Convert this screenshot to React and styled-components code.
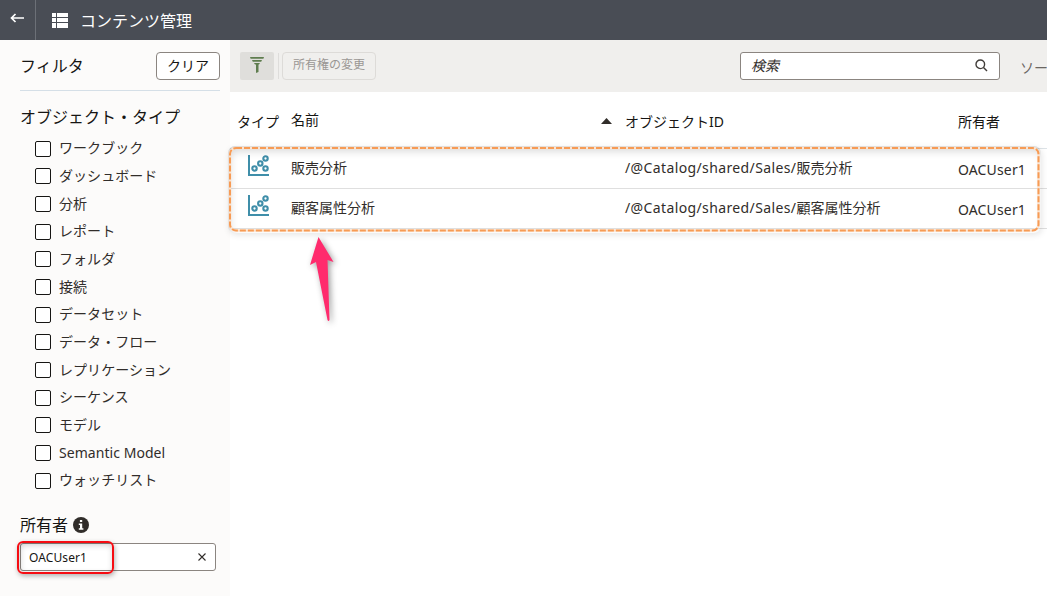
import styled, { createGlobalStyle } from "styled-components";

const objectTypes = [
  "ワークブック",
  "ダッシュボード",
  "分析",
  "レポート",
  "フォルダ",
  "接続",
  "データセット",
  "データ・フロー",
  "レプリケーション",
  "シーケンス",
  "モデル",
  "Semantic Model",
  "ウォッチリスト",
];

const contents = [
  { name: "販売分析", folder: "/@Catalog/shared/Sales/", owner: "OACUser1" },
  { name: "顧客属性分析", folder: "/@Catalog/shared/Sales/", owner: "OACUser1" },
];

const ScatterIcon = () => (
  <svg width="22" height="22" viewBox="0 0 22 22" fill="none" stroke="#3f8ea9">
    <path d="M1 0V20H21" strokeWidth="2" />
    <g strokeWidth="2.1">
      <circle cx="6.5" cy="13.5" r="2.2" />
      <circle cx="12.3" cy="8.5" r="2.2" />
      <circle cx="17.5" cy="3.5" r="2.2" />
      <circle cx="17.5" cy="13.5" r="2.2" />
    </g>
  </svg>
);

const Header = () => (
  <TopBar>
    <BackButton>
      <svg width="14" height="10" viewBox="0 0 14 10" fill="none" stroke="#fff" strokeWidth="1.7">
        <path d="M14 5H1.5M5.5 1L1.5 5L5.5 9" />
      </svg>
    </BackButton>
    <svg width="16" height="15" viewBox="0 0 16 15" fill="#fff">
      <path d="M0 0h4v4H0zM5 0h11v4H5zM0 5h4v4H0zM5 5h11v4H5zM0 10h4v5H0zM5 10h11v5H5z" />
    </svg>
    <PageTitle>コンテンツ管理</PageTitle>
  </TopBar>
);

const FilterPanel = () => (
  <Side>
    <SideHead>
      <SideTitle>フィルタ</SideTitle>
      <ClearButton>クリア</ClearButton>
    </SideHead>
    <GroupTitle>オブジェクト・タイプ</GroupTitle>
    <TypeList>
      {objectTypes.map((type) => (
        <TypeItem key={type}>
          <CheckBox />
          <TypeName>{type}</TypeName>
        </TypeItem>
      ))}
    </TypeList>
    <OwnerTitle>
      所有者
      <svg width="16" height="16" viewBox="0 0 16 16">
        <circle cx="8" cy="8" r="8" fill="#312d2a" />
        <path d="M6.9 3h2.3v2H6.9zM5.8 6.5h3.4v4.8h1.2v1.5H5.8v-1.5H7V8H5.8z" fill="#fff" />
      </svg>
    </OwnerTitle>
    <OwnerField>
      <OwnerValue>OACUser1</OwnerValue>
      <svg width="8" height="8" viewBox="0 0 8 8" stroke="#312d2a" strokeWidth="1.1">
        <path d="M.5 .5L7.5 7.5M7.5 .5L.5 7.5" />
      </svg>
      <OwnerMark />
    </OwnerField>
  </Side>
);

const Toolbar = () => (
  <Tools>
    <FilterToggle>
      <svg width="14" height="16" viewBox="0 0 14 16" fill="#5f7d4f">
        <path d="M0 0H14L13.4 1.8H.6zM2 3H12L11.2 4.8H2.8zM4 6H10L9 7.6H8.5V15L6 16V7.6H5z" />
      </svg>
    </FilterToggle>
    <ToolDivider />
    <OwnerChange disabled>所有権の変更</OwnerChange>
    <Search>
      <em>検索</em>
      <svg width="13" height="13" viewBox="0 0 13 13" fill="none" stroke="#403c38" strokeWidth="1.4">
        <circle cx="5.3" cy="5.3" r="4.3" />
        <path d="M8.5 8.5L12 12" />
      </svg>
    </Search>
    <SortLabel>ソート</SortLabel>
  </Tools>
);

const ContentTable = () => (
  <Table>
    <HeadRow>
      <HeadCell>タイプ</HeadCell>
      <NameHead>
        <span>名前</span>
        <svg width="11" height="6" viewBox="0 0 11 6" fill="#312d2a">
          <path d="M5.5 0L11 6H0z" />
        </svg>
      </NameHead>
      <HeadCell>オブジェクトID</HeadCell>
      <HeadCell>所有者</HeadCell>
    </HeadRow>
    <Rows>
      {contents.map((item) => (
        <Row key={item.name}>
          <IconCell>
            <ScatterIcon />
          </IconCell>
          <Cell>{item.name}</Cell>
          <Cell>
            <Folder>{item.folder}</Folder>
            {item.name}
          </Cell>
          <Cell $low>{item.owner}</Cell>
        </Row>
      ))}
      <RowsMark>
        <svg width="813" height="87" fill="none">
          <rect x="2" y="2" width="808.5" height="82.5" rx="6" stroke="#fbe3cf" strokeWidth="2.5" />
          <rect
            x="2"
            y="2"
            width="808.5"
            height="82.5"
            rx="6"
            stroke="#f79b55"
            strokeWidth="2"
            strokeDasharray="6 2"
          />
        </svg>
      </RowsMark>
      <Pointer width="34" height="94" viewBox="0 0 34 94">
        <path d="M12.5 3L27.5 28L21.5 26L23.5 86Q22.5 88 21.5 86L10 28L4 31Z" fill="#ff2b6d" />
      </Pointer>
    </Rows>
  </Table>
);

const App = () => (
  <Container>
    <GlobalStyle />
    <Header />
    <Body>
      <FilterPanel />
      <Main>
        <Toolbar />
        <ContentTable />
      </Main>
    </Body>
  </Container>
);

export default App;

const GlobalStyle = createGlobalStyle`
  * {
    box-sizing: border-box;
  }
  body {
    margin: 0;
    overflow: hidden;
    font-family: "Noto Sans", "Noto Sans CJK JP", sans-serif;
    font-size: 14px;
    color: #312d2a;
  }
  svg {
    display: block;
    flex-shrink: 0;
  }
  button {
    font: inherit;
    padding: 0;
  }
`;

const Container = styled.div`
  width: 1047px;
  height: 596px;
  display: flex;
  flex-direction: column;
  overflow: hidden;
  background: #fff;
`;

const TopBar = styled.header`
  height: 40px;
  flex-shrink: 0;
  display: flex;
  align-items: center;
  background: #494d55;
  color: #fff;
`;

const BackButton = styled.div`
  width: 36px;
  height: 40px;
  margin-right: 16px;
  padding: 13px 0 0 10px;
  border-right: 1px solid #6c7077;
`;

const PageTitle = styled.h1`
  margin: 1px 0 0 12px;
  font-size: 16px;
  font-weight: 400;
  line-height: 24px;
`;

const Body = styled.div`
  flex: 1;
  display: flex;
`;

const Side = styled.aside`
  width: 230px;
  flex-shrink: 0;
  padding: 12px 10px 0 20px;
  background: #fcfbfa;
`;

const SideHead = styled.div`
  height: 39px;
  display: flex;
  justify-content: space-between;
  align-items: flex-start;
  border-bottom: 1px solid #d5dfe7;
`;

const SideTitle = styled.h2`
  margin: 2px 0 0;
  font-size: 16px;
  font-weight: 400;
  line-height: 24px;
  color: #161513;
`;

const ClearButton = styled.button`
  width: 64px;
  height: 28px;
  border: 1px solid #8b8580;
  border-radius: 4px;
  background: #fff;
  color: #161513;
  line-height: 26px;
`;

const GroupTitle = styled.h3`
  margin: 14px 0 0;
  font-size: 16px;
  font-weight: 400;
  line-height: 24px;
  color: #161513;
`;

const TypeList = styled.ul`
  list-style: none;
  margin: 6px 0 0;
  padding: 0 0 0 15px;
`;

const TypeItem = styled.li`
  height: 27.66px;
  display: flex;
  align-items: center;
`;

const CheckBox = styled.span`
  width: 16px;
  height: 16px;
  margin-right: 8px;
  border: 1px solid #161513;
  border-radius: 2px;
  background: #fff;
`;

const TypeName = styled.span`
  line-height: 20px;
  padding-bottom: 1px;
  letter-spacing: 0.05px;
`;

const OwnerTitle = styled.h3`
  display: flex;
  align-items: center;
  gap: 5px;
  margin: 18px 0 0;
  font-size: 16px;
  font-weight: 400;
  line-height: 24px;
  color: #161513;
`;

const OwnerField = styled.div`
  position: relative;
  width: 196px;
  height: 28px;
  margin-top: 6px;
  padding: 0 9px 0 8px;
  display: flex;
  align-items: center;
  justify-content: space-between;
  border: 1px solid #8b8580;
  border-radius: 3px;
  background: #fff;
  font-size: 12px;
  color: #161513;
`;

const OwnerValue = styled.span`
  padding-top: 2px;
  letter-spacing: 0.1px;
`;

const OwnerMark = styled.div`
  position: absolute;
  left: -4px;
  top: -3px;
  width: 97px;
  height: 33px;
  border: 2px solid #f60c12;
  border-radius: 6px;
  box-shadow: 1px 2px 5px rgba(0, 0, 0, 0.3), inset 1px 2px 6px rgba(0, 0, 0, 0.2);
`;

const Main = styled.main`
  flex: 1;
  min-width: 0;
`;

const Tools = styled.div`
  height: 52px;
  padding: 0 0 0 10px;
  display: flex;
  align-items: center;
  background: #f0efed;
  overflow: hidden;
`;

const FilterToggle = styled.div`
  width: 34px;
  height: 28px;
  flex-shrink: 0;
  padding-bottom: 3px;
  display: flex;
  align-items: center;
  justify-content: center;
  border-radius: 2px;
  background: #dfdedb;
`;

const ToolDivider = styled.div`
  width: 1px;
  height: 26px;
  flex-shrink: 0;
  margin: 0 3px 0 4px;
  background: #dedddb;
`;

const OwnerChange = styled.button`
  width: 94px;
  height: 28px;
  flex-shrink: 0;
  border: 1px solid #dddbd8;
  border-radius: 4px;
  background: transparent;
  color: #9a9794;
  font-size: 12px;
  line-height: 24px;
  padding-bottom: 2px;
`;

const Search = styled.div`
  width: 260px;
  height: 28px;
  flex-shrink: 0;
  margin-left: 364px;
  padding: 0 11px 2px 10px;
  display: flex;
  align-items: center;
  justify-content: space-between;
  border: 1px solid #8b8580;
  border-radius: 3px;
  background: #fff;

  & > em {
    padding-bottom: 1px;
  }
`;

const SortLabel = styled.span`
  flex-shrink: 0;
  margin: 2px 0 0 20px;
  color: #6b6662;
`;

const Table = styled.section`
  display: flex;
  flex-direction: column;
`;

const HeadRow = styled.div`
  height: 57px;
  padding-left: 7px;
  display: grid;
  grid-template-columns: 54px 334px 333px 1fr;
  align-items: center;
  border-bottom: 1px solid #dde3e7;
  color: #161513;
`;

const HeadCell = styled.div`
  white-space: nowrap;
  padding-top: 2px;
`;

const NameHead = styled.div`
  display: flex;
  align-items: center;
  justify-content: space-between;
  padding-right: 13px;

  & > span {
    padding-bottom: 2px;
  }

  & > svg {
    margin-top: 1px;
  }
`;

const Rows = styled.div`
  position: relative;
`;

const Row = styled.div`
  height: 40px;
  padding-left: 7px;
  display: grid;
  grid-template-columns: 54px 334px 333px 1fr;
  align-items: center;
  border-bottom: 1px solid #dfdfdf;
`;

const IconCell = styled.div`
  padding: 0 0 5px 11px;
`;

const Cell = styled.div`
  white-space: nowrap;
  padding: ${({ $low }) => ($low ? "2px 0 0" : "0 0 3px")};
  letter-spacing: ${({ $low }) => ($low ? "0.15px" : "0")};
`;

const Folder = styled.span`
  letter-spacing: 0.38px;
`;

const RowsMark = styled.div`
  position: absolute;
  left: -2px;
  top: -3px;
  width: 813px;
  height: 87px;
  border-radius: 7px;
  box-shadow: 1px 2px 6px rgba(0, 0, 0, 0.1), inset 2px 5px 9px rgba(0, 0, 0, 0.16);
`;

const Pointer = styled.svg`
  position: absolute;
  left: 76px;
  top: 85px;
  filter: drop-shadow(2px 2px 3px rgba(0, 0, 0, 0.4));
`;
